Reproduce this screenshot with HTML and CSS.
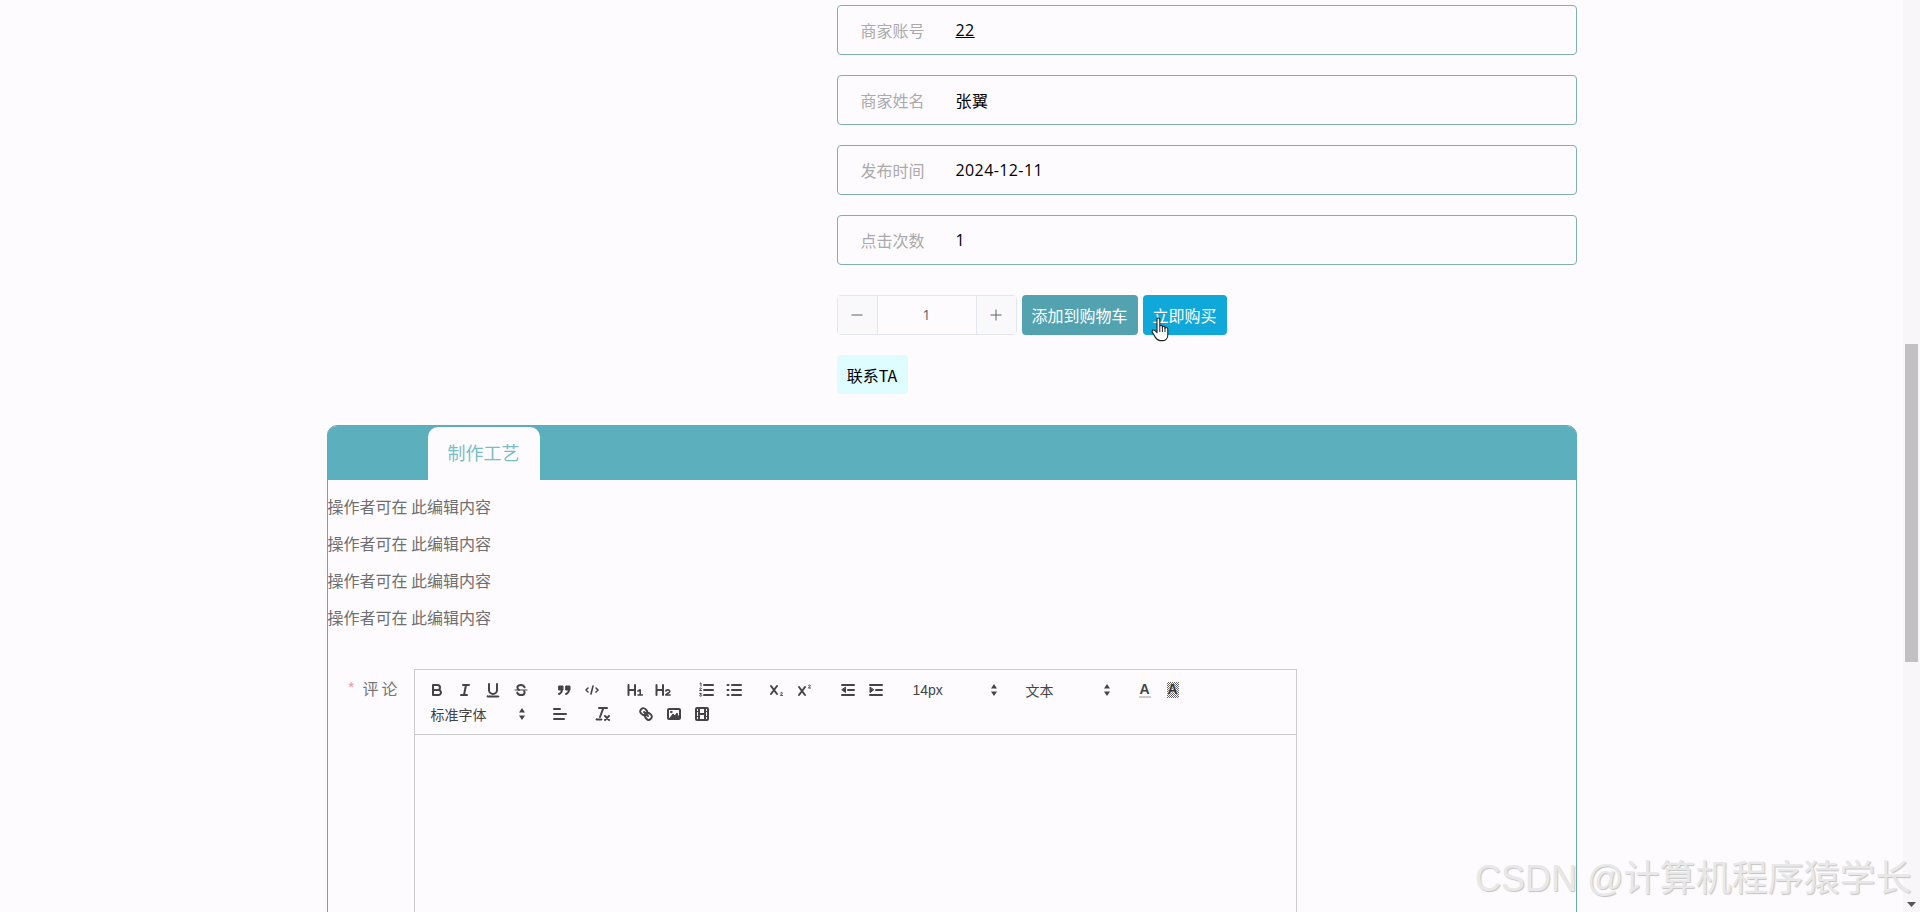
FILE: index.html
```html
<!DOCTYPE html>
<html>
<head>
    <title>商品详情</title>
    <link rel="stylesheet" href="styles.css">
</head>
<body>
    <div class="page">
        <div class="main">
            <div class="content">
                <div class="detail">
                    <div class="field"><span class="field-label">商家账号</span><span class="field-value link">22</span></div>
                    <div class="field"><span class="field-label">商家姓名</span><span class="field-value">张翼</span></div>
                    <div class="field"><span class="field-label">发布时间</span><span class="field-value">2024-12-11</span></div>
                    <div class="field"><span class="field-label">点击次数</span><span class="field-value">1</span></div>

                    <div class="actions">
                        <div class="stepper">
                            <span class="step-btn"><svg width="12" height="12" viewBox="0 0 12 12"><path d="M0.5 6h11" stroke="#606266" stroke-width="1"/></svg></span>
                            <span class="step-num">1</span>
                            <span class="step-btn"><svg width="12" height="12" viewBox="0 0 12 12"><path d="M0.5 6h11M6 0.5v11" stroke="#606266" stroke-width="1"/></svg></span>
                        </div>
                        <button class="btn btn-cart">添加到购物车</button>
                        <button class="btn btn-buy">立即购买
                            <svg class="hand" width="20" height="26" viewBox="0 0 20 26">
                                <path d="M6 13V3.2C6 1.6 8.8 1.6 8.8 3.2V10.5C8.8 9 11.4 9 11.4 10.6V11.4C11.4 10 14 10 14 11.6V12.4C14 11 16.8 11.2 16.8 13V19C16.8 22 15 24.6 12 24.6H9.5C7 24.6 5.6 23.4 4.4 21.4L1.4 16.4C0.4 14.6 2.6 13.2 4 14.6L6 16.6Z" fill="#fff" stroke="#222" stroke-width="1.1" stroke-linejoin="round"/>
                                <path d="M8.8 11v5M11.4 11.4v4.6M14 12.2v3.8" stroke="#222" stroke-width="1"/>
                            </svg>
                        </button>
                    </div>
                    <button class="btn-contact">联系TA</button>
                </div>

                <div class="panel">
                    <div class="tabs">
                        <div class="tab">制作工艺</div>
                    </div>
                    <div class="panel-body">
                        <p>操作者可在 此编辑内容</p>
                        <p>操作者可在 此编辑内容</p>
                        <p>操作者可在 此编辑内容</p>
                        <p>操作者可在 此编辑内容</p>
                    </div>

                    <div class="comment">
                        <div class="comment-label"><span class="star">*</span><span class="comment-text">评论</span></div>
                        <div class="editor">
                            <div class="toolbar">
                                <div class="tb-row">
                                    <span class="tb"><svg viewBox="0 0 18 18"><path d="M5,4H9.5A2.5,2.5,0,0,1,12,6.5v0A2.5,2.5,0,0,1,9.5,9H5V4Z"/><path d="M5,9h5.5A2.5,2.5,0,0,1,13,11.5v0A2.5,2.5,0,0,1,10.5,14H5V9Z"/></svg></span>
                                    <span class="tb"><svg viewBox="0 0 18 18"><path d="M7 4h6M5 14h6M8 14l2-10"/></svg></span>
                                    <span class="tb"><svg viewBox="0 0 18 18"><path d="M5,3V9a4,4,0,0,0,4,4h0a4,4,0,0,0,4-4V3"/><rect class="fill" x="3" y="15" width="12" height="1" rx="0.5"/></svg></span>
                                    <span class="tb"><svg viewBox="0 0 18 18"><path class="thin" d="M3 9h12"/><path d="M12.6 6.3C12 4.8 10.6 4 9 4 7 4 5.4 5 5.4 6.6c0 1 .6 1.8 1.6 2.4M5.2 11.6C5.7 13.2 7.2 14 9 14c2 0 3.6-1 3.6-2.6 0-.6-.2-1-.5-1.4"/></svg></span>

                                    <span class="tb group"><svg viewBox="0 0 18 18"><rect class="fill" x="4" y="5" width="4" height="4"/><rect class="fill" x="11" y="5" width="4" height="4"/><path d="M7,8c0,4-3,5-3,5M14,8c0,4-3,5-3,5"/></svg></span>
                                    <span class="tb"><svg viewBox="0 0 18 18"><path class="mid" d="M5 7L3 9l2 2M13 7l2 2-2 2M10 5L8 13"/></svg></span>

                                    <span class="tb group"><svg viewBox="0 0 18 18"><path d="M2.5 4v10M9 4v10M2.5 9H9"/><path class="mid" d="M12 10l2.2-1.2V14M12 14h4.4"/></svg></span>
                                    <span class="tb"><svg viewBox="0 0 18 18"><path d="M2.5 4v10M9 4v10M2.5 9H9"/><path class="mid" d="M11.8 10c.3-1.6 4-1.6 4 .4 0 1.4-3.6 2.2-4 3.6h4.4"/></svg></span>

                                    <span class="tb group"><svg viewBox="0 0 18 18"><path d="M7 4h9M7 9h9M7 14h9"/><path class="thin" d="M3 2.5l1-.6v3.2M2.6 7.4c.3-.7 1.8-.6 1.8.2 0 .7-1.6 1-1.8 2h2M2.6 12.4h1.8l-1 1.2c1 0 1.4.3 1.4.8 0 .9-1.6 1-2.2.4"/></svg></span>
                                    <span class="tb"><svg viewBox="0 0 18 18"><path d="M7 4h9M7 9h9M7 14h9M2.5 4h1M2.5 9h1M2.5 14h1"/></svg></span>

                                    <span class="tb group"><svg viewBox="0 0 18 18"><path d="M3 5l6 8M9 5l-6 8"/><path class="thin" d="M12.4 12c.2-.8 2-.8 2 .2 0 .8-1.8 1.2-2 2.2h2.2"/></svg></span>
                                    <span class="tb"><svg viewBox="0 0 18 18"><path d="M3 6l6 8M9 6l-6 8"/><path class="thin" d="M12.4 4.6c.2-.8 2-.8 2 .2 0 .8-1.8 1.2-2 2.2h2.2"/></svg></span>

                                    <span class="tb group"><svg viewBox="0 0 18 18"><path d="M3 4h12M3 14h12M9 9h6"/><path class="fill" d="M6.5 6.5v5L3 9z"/></svg></span>
                                    <span class="tb"><svg viewBox="0 0 18 18"><path d="M3 4h12M3 14h12M9 9h6"/><path class="fill" d="M3 6.5v5L6.5 9z"/></svg></span>

                                    <span class="picker picker-size group"><span class="picker-text latin">14px</span><svg class="arrows" viewBox="0 0 8 14"><path d="M4 1l3 4.4H1zM4 13L1 8.6h6z"/></svg></span>
                                    <span class="picker picker-size group"><span class="picker-text">文本</span><svg class="arrows" viewBox="0 0 8 14"><path d="M4 1l3 4.4H1zM4 13L1 8.6h6z"/></svg></span>

                                    <span class="tb group"><span class="color-a">A</span></span>
                                    <span class="tb"><span class="bg-a">A</span></span>
                                </div>
                                <div class="tb-row">
                                    <span class="picker picker-font"><span class="picker-text">标准字体</span><svg class="arrows" viewBox="0 0 8 14"><path d="M4 1l3 4.4H1zM4 13L1 8.6h6z"/></svg></span>
                                    <span class="tb group"><svg viewBox="0 0 18 18"><path d="M3 4h6M3 9h12M3 14h10"/></svg></span>
                                    <span class="tb group"><svg viewBox="0 0 18 18"><path d="M5 3h8M6 12L9.35 3M11 11l4 4M15 11l-4 4"/><rect class="fill" x="2" y="14" width="6" height="1" rx="0.5"/></svg></span>
                                    <span class="tb group"><svg viewBox="0 0 18 18"><path d="M7 7l4 4"/><path d="M8.9,4.577a3.476,3.476,0,0,1,.36,4.679A3.476,3.476,0,0,1,4.577,8.9C3.185,7.5,2.035,6.4,4.217,4.217S7.5,3.185,8.9,4.577Z"/><path d="M13.423,9.1a3.476,3.476,0,0,0-4.679-.36,3.476,3.476,0,0,0,.36,4.679c1.392,1.392,2.5,2.542,4.679.36S14.815,10.5,13.423,9.1Z"/></svg></span>
                                    <span class="tb"><svg viewBox="0 0 18 18"><rect x="3" y="4" width="12" height="10" rx="1"/><path class="fill" d="M5 13l3-4 2 2 2-3 2 5z"/><circle class="fill" cx="6.2" cy="7" r="0.8"/></svg></span>
                                    <span class="tb"><svg viewBox="0 0 18 18"><rect x="3" y="3" width="12" height="12" rx="1"/><path d="M6 3.5v11M12 3.5v11M6 9h6"/><path class="thin" d="M3 6.5h3M3 11.5h3M12 6.5h3M12 11.5h3"/></svg></span>
                                </div>
                            </div>
                            <div class="editor-body"></div>
                        </div>
                    </div>
                </div>
            </div>
        </div>
        <div class="scrollbar">
            <div class="thumb"></div>
            <svg class="scroll-arrow" width="9" height="5" viewBox="0 0 9 5"><path d="M0 0h9L4.5 5z" fill="#555"/></svg>
        </div>
    </div>
    <div class="watermark">CSDN @计算机程序猿学长</div>
</body>
</html>
```

FILE: styles.css
```css
* {
    box-sizing: border-box;
}
html, body {
    margin: 0;
    height: 100%;
    overflow: hidden;
}
body {
    background: #fdfbfe;
    font-family: "Open Sans", "Noto Sans CJK SC", sans-serif;
    color: #000;
}
.page {
    display: flex;
    height: 912px;
    overflow: hidden;
}
.main {
    flex: 1;
    min-width: 0;
    overflow: hidden;
}
.content {
    width: 1250px;
    margin: 0 auto;
    padding-top: 5px;
}
.detail {
    margin-left: 510px;
    width: 740px;
}
.field {
    display: flex;
    align-items: center;
    height: 50px;
    margin-bottom: 20px;
    padding-left: 23px;
    border: 1px solid #7fb0ac;
    border-radius: 4px;
    font-size: 16px;
}
.field-label {
    width: 95px;
    color: #aaa;
}
.field-value {
    letter-spacing: 0.4px;
}
.link {
    text-decoration: underline;
}
.actions {
    display: flex;
    gap: 5px;
    margin-top: 30px;
}
.stepper {
    display: flex;
    width: 180px;
    height: 40px;
    border: 1px solid #e4e7ed;
    border-radius: 4px;
}
.step-btn {
    display: flex;
    align-items: center;
    justify-content: center;
    width: 39px;
    background: #f9f9fb;
}
.step-num {
    flex: 1;
    line-height: 38px;
    text-align: center;
    font-size: 14px;
    color: #606266;
    border-left: 1px solid #e4e7ed;
    border-right: 1px solid #e4e7ed;
}
.btn {
    position: relative;
    height: 40px;
    padding: 0 9px;
    border: none;
    border-radius: 4px;
    color: #fff;
    font: 16px "Noto Sans CJK SC", sans-serif;
}
.btn-cart {
    width: 116px;
    background: #52a2b0;
}
.btn-buy {
    width: 84px;
    background: #10a8d8;
}
.hand {
    position: absolute;
    left: 8px;
    top: 21px;
}
.btn-contact {
    display: block;
    width: 71px;
    height: 39px;
    margin-top: 20px;
    padding: 0;
    border: none;
    border-radius: 4px;
    background: #dffcff;
    color: #000;
    font: 16px "Noto Sans CJK SC", sans-serif;
}
.panel {
    margin-top: 31px;
    height: 600px;
    border: 1px solid #6aa9ab;
    border-radius: 10px 10px 0 0;
}
.tabs {
    display: flex;
    height: 54px;
    margin: 0 -1px;
    padding-left: 101px;
    padding-top: 1px;
    background: #5cafbc;
    border-radius: 10px 10px 0 0;
}
.tab {
    width: 112px;
    line-height: 53px;
    text-align: center;
    font-size: 18px;
    color: #7abcc4;
    background: #fdfbfe;
    border-radius: 10px 10px 0 0;
}
.panel-body {
    padding-top: 8px;
    font-size: 16px;
    color: #6f6f6f;
    font-family: "Noto Sans CJK SC", sans-serif;
}
.panel-body p {
    margin: 0;
    line-height: 37px;
}
.comment {
    display: flex;
    margin-top: 33px;
}
.comment-label {
    display: flex;
    width: 86px;
    padding-left: 20px;
    padding-top: 8px;
    font-size: 16px;
    line-height: 22px;
    color: #777;
    font-family: "Noto Sans CJK SC", sans-serif;
}
.star {
    width: 15px;
    color: #f0a0a8;
}
.comment-text {
    letter-spacing: 3px;
}
.editor {
    width: 883px;
    height: 500px;
    border: 1px solid #ccc;
}
.toolbar {
    padding: 8px;
    height: 65px;
    border-bottom: 1px solid #ccc;
}
.tb-row {
    display: flex;
    height: 24px;
    color: #444;
}
.tb {
    display: flex;
    align-items: center;
    justify-content: center;
    flex: none;
    width: 28px;
    height: 24px;
}
.tb svg {
    width: 18px;
    height: 18px;
    fill: none;
    stroke: #444;
    stroke-width: 2;
    stroke-linecap: round;
    stroke-linejoin: round;
}
.tb .thin {
    stroke-width: 1;
}
.tb .mid {
    stroke-width: 1.6;
}
.tb .fill {
    fill: #444;
    stroke: #444;
    stroke-width: 1;
}
.group {
    margin-left: 15px;
}
.picker {
    display: flex;
    align-items: center;
    flex: none;
    height: 24px;
    padding-left: 8px;
    color: #444;
}
.picker-size {
    width: 98px;
}
.picker-font {
    width: 108px;
}
.picker-text {
    flex: 1;
    font: 14px "Noto Sans CJK SC", sans-serif;
}
.picker .latin {
    font-family: "Liberation Sans", sans-serif;
}
.arrows {
    flex: none;
    width: 8px;
    height: 14px;
    margin-right: 5px;
    fill: #444;
}
.color-a, .bg-a {
    display: block;
    width: 12px;
    height: 16px;
    text-align: center;
    font: bold 14px/14px "Liberation Sans", sans-serif;
    color: #444;
}
.color-a {
    border-bottom: 2px solid #ccc;
}
.bg-a {
    background: repeating-conic-gradient(#666 0 25%, #fdfbfe 0 50%) 0 0 / 2px 2px;
    color: #333;
    text-shadow: 0 0 1px #fff, 0 0 1px #fff;
}
.editor-body {
    height: 430px;
}
.scrollbar {
    position: relative;
    flex: none;
    width: 17px;
    padding: 344px 2px 0;
    background: #f8f6f9;
}
.thumb {
    height: 318px;
    background: #c3c0c4;
}
.scroll-arrow {
    position: absolute;
    left: 4px;
    bottom: 5px;
}
.watermark {
    position: absolute;
    left: 1475px;
    top: 851px;
    white-space: nowrap;
    font: 36px/56px "Liberation Sans", "Noto Sans CJK SC", sans-serif;
    color: #e8e8e8;
    text-shadow: 1px 1px 1px #c4c4c4;
}
```
